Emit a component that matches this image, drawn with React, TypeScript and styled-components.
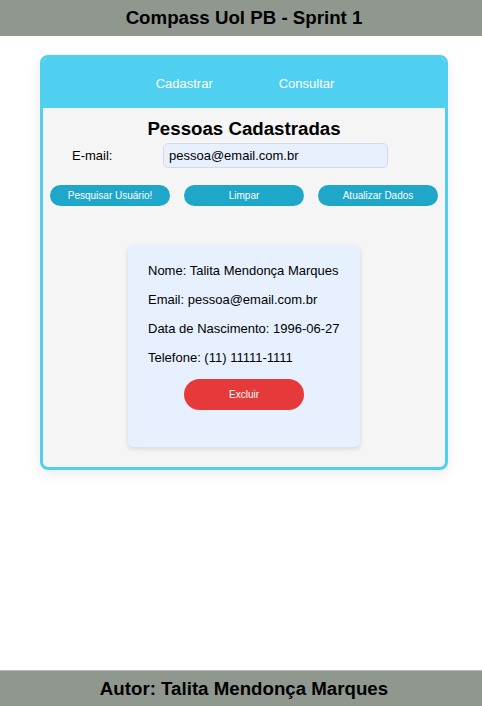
import React from "react";
import styled, { createGlobalStyle } from "styled-components";

const Global = createGlobalStyle`
  html, body { margin: 0; padding: 0; background: #ffffff; }
  body { font-family: Arial, "Liberation Sans", sans-serif; color: #000; }
  * { box-sizing: border-box; }
`;

const Page = styled.div`
  min-height: 100vh;
  display: flex;
  flex-direction: column;
`;

const Bar = styled.div`
  height: 36px;
  background: #8f978f;
  display: flex;
  align-items: center;
  justify-content: center;
  padding-left: 6px;
  font-weight: bold;
  font-size: 18.7px;
  color: #000;
`;

const Footer = styled(Bar)`
  margin-top: auto;
  border-top: 1px solid #b4b9b4;
`;

const Main = styled.main`
  padding: 19px 0 0 40px;
`;

const Card = styled.section`
  width: 408px;
  border: 3px solid #50d0f0;
  border-radius: 8px;
  background: #f5f5f5;
  overflow: hidden;
  box-shadow: 0 4px 14px rgba(0, 0, 0, 0.08);
`;

const Nav = styled.nav`
  height: 50px;
  background: #50d0f0;
  display: flex;
  align-items: center;
  justify-content: center;
  gap: 66px;
  padding-left: 2px;
`;

const NavLink = styled.a`
  color: #ffffff;
  font-size: 13px;
  text-decoration: none;
  cursor: pointer;
`;

const Body = styled.div`
  padding: 10px 0 20px;
  display: flex;
  flex-direction: column;
`;

const Title = styled.h2`
  margin: 0;
  font-size: 18.7px;
  line-height: 21px;
  text-align: center;
  font-weight: bold;
`;

const Row = styled.div`
  margin-top: 4px;
  display: flex;
  align-items: center;
  padding-left: 29px;
`;

const Label = styled.label`
  width: 91px;
  font-size: 13px;
`;

const Input = styled.input`
  width: 225px;
  height: 25px;
  border: 1px solid #d3dae6;
  border-radius: 5px;
  background: #e8f0fe;
  font-family: Arial, "Liberation Sans", sans-serif;
  font-size: 13px;
  padding: 0 5px;
  color: #000;
  outline: none;
`;

const Actions = styled.div`
  margin-top: 17px;
  display: flex;
  justify-content: space-around;
`;

const Button = styled.button<{ $danger?: boolean }>`
  width: 120px;
  height: ${(p) => (p.$danger ? "31px" : "21px")};
  border: none;
  border-radius: 16px;
  background: ${(p) => (p.$danger ? "#e63a3a" : "#1fa7c9")};
  color: #ffffff;
  font-family: Arial, "Liberation Sans", sans-serif;
  font-size: 10px;
  cursor: pointer;
  padding: 0;
`;

const Result = styled.div`
  margin: 39px auto 0;
  width: 232px;
  background: #e6f0fe;
  border-radius: 5px;
  box-shadow: 0 2px 5px rgba(0, 0, 0, 0.12);
  padding: 18px 20px 37px;
  display: flex;
  flex-direction: column;
  gap: 13px;
`;

const Info = styled.p`
  margin: 0;
  font-size: 13px;
  line-height: 16px;
  white-space: nowrap;
`;

const Center = styled.div`
  display: flex;
  justify-content: center;
`;

export default function App() {
  return (
    <Page>
      <Global />
      <Bar>Compass Uol PB - Sprint 1</Bar>
      <Main>
        <Card>
          <Nav>
            <NavLink>Cadastrar</NavLink>
            <NavLink>Consultar</NavLink>
          </Nav>
          <Body>
            <Title>Pessoas Cadastradas</Title>
            <Row>
              <Label>E-mail:</Label>
              <Input defaultValue="pessoa@email.com.br" />
            </Row>
            <Actions>
              <Button>Pesquisar Usuário!</Button>
              <Button>Limpar</Button>
              <Button>Atualizar Dados</Button>
            </Actions>
            <Result>
              <Info>Nome: Talita Mendonça Marques</Info>
              <Info>Email: pessoa@email.com.br</Info>
              <Info>Data de Nascimento: 1996-06-27</Info>
              <Info>Telefone: (11) 11111-1111</Info>
              <Center>
                <Button $danger>Excluir</Button>
              </Center>
            </Result>
          </Body>
        </Card>
      </Main>
      <Footer>Autor: Talita Mendonça Marques</Footer>
    </Page>
  );
}
